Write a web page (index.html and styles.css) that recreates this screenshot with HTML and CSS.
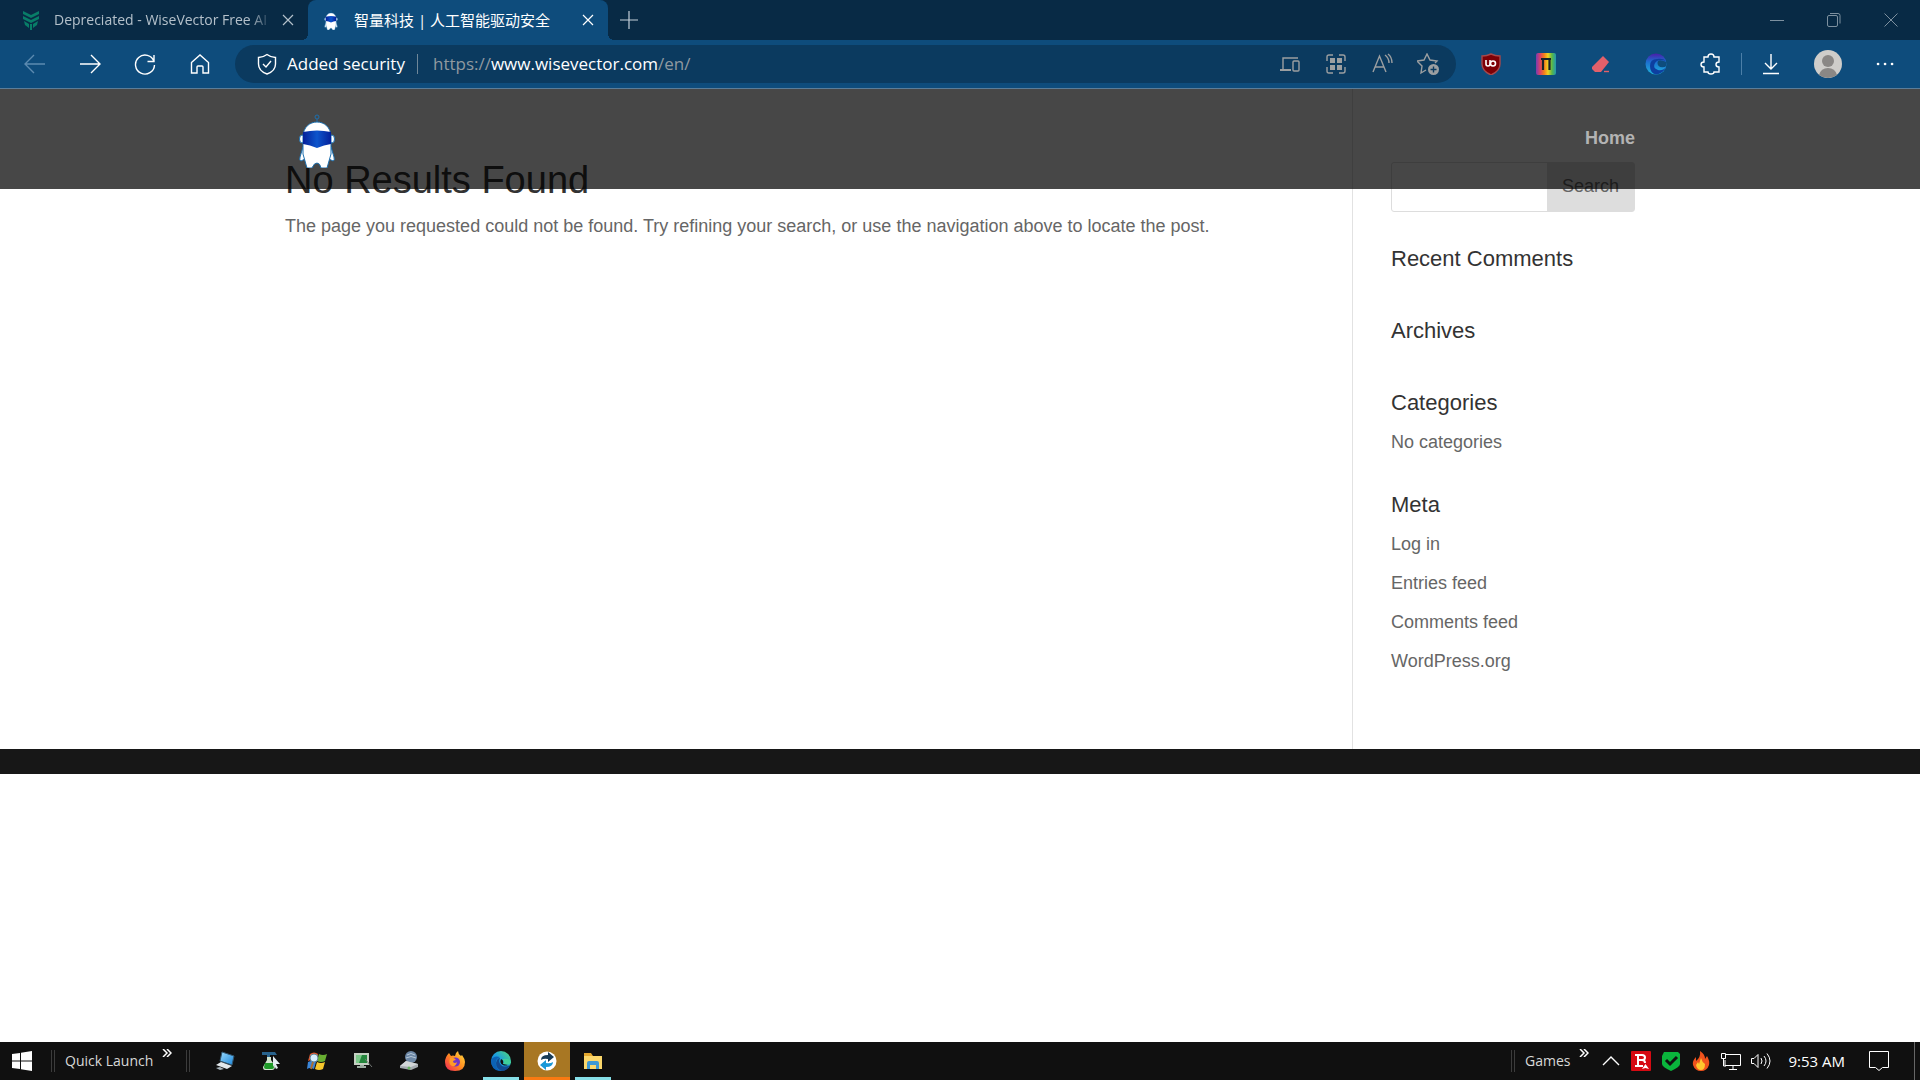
FILE: index.html
```html
<!DOCTYPE html>
<html lang="en">
<head>
  <meta charset="UTF-8">
  <meta name="viewport" content="width=device-width, initial-scale=1.0">
  <title>智量科技 | 人工智能驱动安全</title>
  <link rel="stylesheet" href="styles.css">
</head>
<body>
  <svg class="defs" aria-hidden="true">
    <defs>
      <linearGradient id="visor"><stop offset="0" stop-color="#04209a"/><stop offset=".5" stop-color="#0d55cc"/><stop offset="1" stop-color="#04209a"/></linearGradient>
      <linearGradient id="rainbow"><stop offset="0" stop-color="#7a3bb0"/><stop offset=".2" stop-color="#d8406a"/><stop offset=".4" stop-color="#f47a1c"/><stop offset=".6" stop-color="#f0d020"/><stop offset=".8" stop-color="#58b848"/><stop offset="1" stop-color="#2098b0"/></linearGradient>
      <linearGradient id="edge" x1="0" y1="1" x2="1" y2="0"><stop offset="0" stop-color="#0b5fb8"/><stop offset=".5" stop-color="#1b9de0"/><stop offset="1" stop-color="#55dd70"/></linearGradient>
      <linearGradient id="swirl" x1="0" y1="0" x2="0" y2="1"><stop offset="0" stop-color="#4a1ca8"/><stop offset=".4" stop-color="#1c6fd0"/><stop offset="1" stop-color="#20b4dc"/></linearGradient>
      <linearGradient id="fox" x1="1" y1="0" x2="0" y2="1"><stop offset="0" stop-color="#ffe040"/><stop offset=".5" stop-color="#ff8a20"/><stop offset="1" stop-color="#f0205a"/></linearGradient>
      <linearGradient id="sky" x1="0" y1="0" x2="1" y2="1"><stop offset="0" stop-color="#9adcff"/><stop offset="1" stop-color="#1a84d8"/></linearGradient>
    </defs>
    <symbol id="robot" viewBox="0 0 36 54">
      <g stroke="#1c6fae" stroke-width="1">
        <path d="M18 9V5" fill="none"/><circle cx="18" cy="3" r="2" fill="none"/>
        <path d="M4 33L1 43q-1 4 1 4l6-3zM32 33l3 10q1 4-1 4l-6-3z" fill="#fff"/>
        <ellipse cx="3" cy="25" rx="2.500" ry="4" fill="#fff"/><ellipse cx="33" cy="25" rx="2.500" ry="4" fill="#fff"/>
        <path d="M4 23C4 3 32 3 32 23V40L28 54H22Q21 49 18 49T13 54H8L4 40z" fill="#fff"/>
      </g>
      <path d="M4 18Q18 15 32 18V30Q25 31 18 34Q11 31 4 30z" fill="url(#visor)"/>
    </symbol>
    <symbol id="close" viewBox="0 0 16 16"><path d="M3 3l10 10M13 3L3 13" fill="none" stroke="currentColor" stroke-width="1.200"/></symbol>
    <symbol id="more" viewBox="0 0 10 8"><path d="M1 0l4 4-4 4M5 0l4 4-4 4" fill="none" stroke="#fff" stroke-width="1.500"/></symbol>
  </svg>

  <!-- browser tabs -->
  <div class="tabstrip">
    <div class="tab">
      <svg class="favicon" viewBox="0 0 18 20"><path d="M1 1l8 4 8-4v3L9 8 1 4zM1 6l8 4 8-4v3l-8 4-8-4zM2 11l5 3v4l-4-3zM16 11l-5 3v4l4-3zM8 14h2v6H8z" fill="#087d68"/></svg>
      <span class="tab-title fade">Depreciated - WiseVector Free AI</span>
      <button class="tab-close" aria-label="Close tab"><svg><use href="#close"/></svg></button>
    </div>
    <div class="tab active">
      <svg class="favicon"><use href="#robot"/></svg>
      <span class="tab-title">智量科技 | 人工智能驱动安全</span>
      <button class="tab-close" aria-label="Close tab"><svg><use href="#close"/></svg></button>
    </div>
    <button class="tab-new" aria-label="New tab"><svg viewBox="0 0 18 18"><path d="M9 0v18M0 9h18" fill="none" stroke="#c4d0da" stroke-width="1.200"/></svg></button>
    <div class="win-btns">
      <button aria-label="Minimize"><svg viewBox="0 0 14 14"><path d="M0 7.500h14"/></svg></button>
      <button aria-label="Restore"><svg viewBox="0 0 14 14"><rect x=".5" y="2.500" width="10" height="11" rx="1.500"/><path d="M3 .5h8q2 0 2 2v8"/></svg></button>
      <button aria-label="Close"><svg viewBox="0 0 14 14"><path d="M.5.5l13 13M13.500.5l-13 13"/></svg></button>
    </div>
  </div>

  <!-- address bar -->
  <div class="toolbar">
    <button class="tool dim" aria-label="Back"><svg viewBox="0 0 22 22"><path d="M21 11H1M10 2l-9 9 9 9"/></svg></button>
    <button class="tool" aria-label="Forward"><svg viewBox="0 0 22 22"><path d="M1 11h20M12 2l9 9-9 9"/></svg></button>
    <button class="tool" aria-label="Reload"><svg viewBox="0 0 22 22"><path d="M20 8.500A9.500 9.500 0 1 0 20.500 12M20 2v6.500h-6.500"/></svg></button>
    <button class="tool" aria-label="Home"><svg viewBox="0 0 22 22"><path d="M2.500 9.500L11 2l8.500 7.500V20h-5.500v-6q0-1-1-1h-4q-1 0-1 1v6H2.500z"/></svg></button>
    <div class="address">
      <button class="secure"><svg viewBox="0 0 22 22"><path d="M11 1.500q4 3 8.500 3V11q0 7-8.500 10Q2.500 18 2.500 11V4.500q4.500 0 8.500-3zM7 11l3 3 5-6"/></svg>Added security</button>
      <span class="divider"></span>
      <div class="url" role="textbox" aria-label="Address" contenteditable="true">https://<b>www.wisevector.com</b>/en/</div>
      <button class="tool" aria-label="Devices"><svg viewBox="0 0 22 22"><path d="M4 16V5h15"/><path d="M1 17h11" stroke-width="2"/><rect x="14" y="8" width="6" height="10" rx="1"/></svg></button>
      <button class="tool" aria-label="Apps"><svg viewBox="0 0 22 22"><path d="M2 8V4q0-2 2-2h4M14 2h4q2 0 2 2v4M20 14v4q0 2-2 2h-4M8 20H4q-2 0-2-2v-4"/><path d="M5 5h5v5H5zM12 5h5v5h-5zM5 12h5v5H5zM12 12h5v5h-5z" class="solid"/></svg></button>
      <button class="tool" aria-label="Read aloud"><svg viewBox="0 0 22 22"><path d="M2 19L8.500 3 15 19M4 14h9M14 2q4 3 4 8M17 1q4 3 4 9"/></svg></button>
      <button class="tool" aria-label="Add to favorites"><svg viewBox="0 0 22 22"><path d="M9 17l-5 3 1-7-5-5 7-1 3-6 3 6 7 1-2 2"/><circle cx="16.500" cy="16.500" r="5.500" class="solid"/><path d="M16.500 13.500v6M13.500 16.500h6" stroke="#0b3a5f"/></svg></button>
    </div>
    <div class="extensions">
      <button class="tool" aria-label="uBlock"><svg viewBox="0 0 22 22"><path d="M11 1q4 2 9 2v8q0 7-9 11Q2 18 2 11V3q5 0 9-2z" fill="#7d0006" stroke="#a5484c"/><path d="M6 7v4q0 2 2 2t2-2V7" stroke="#fff" stroke-width="1.600"/><circle cx="13" cy="10.500" r="2.500" stroke="#fff" stroke-width="1.600"/></svg></button>
      <button class="tool" aria-label="Rainbow"><svg viewBox="0 0 22 22"><rect x="1" y="0" width="20" height="22" rx="2" fill="url(#rainbow)" stroke="none"/><path d="M6 6h10M8 6v11M14.500 6v11" stroke="#16222a" stroke-width="2.200"/></svg></button>
      <button class="tool" aria-label="Eraser"><svg viewBox="0 0 22 22"><path d="M2 14L13 3l6 6-8 10H5l-3-3z" fill="#e2606a" stroke="none"/><path d="M14 18.500h5" stroke="#e2606a"/></svg></button>
      <button class="tool" aria-label="Edge extension"><svg viewBox="0 0 22 22"><circle cx="11" cy="11" r="10.500" fill="url(#swirl)" stroke="none"/><path d="M21 8Q13 5 10 10t3 7q5 1 8-3-3 7-10 7.500Q5 20 5 13t7-7q6-1 9 2z" fill="#0d3fa0" stroke="none"/><path d="M21.500 9q-9-4-9 1t7 4q2 0 2-5z" fill="#0e4c7c" stroke="none"/></svg></button>
      <button class="tool" aria-label="Extensions"><svg viewBox="0 0 22 22"><path d="M4 4h4q0-3 3-3t3 3h5v5q-3 0-3 2.500t3 2.500v5h-5q0 2-3 2t-3-2H4v-5q-3 0-3-2.500T4 9z"/></svg></button>
    </div>
    <div class="session">
      <button class="tool" aria-label="Downloads"><svg viewBox="0 0 22 22"><path d="M11 1v15M5 10l6 6 6-6M3 20.500h16"/></svg></button>
      <button class="tool" aria-label="Profile"><svg class="avatar" viewBox="0 0 28 28"><circle cx="14" cy="14" r="14" fill="#cfcdca"/><circle cx="14" cy="11" r="6" fill="#8a8785"/><path d="M5 25q2-7 9-7t9 7q-4 3-9 3t-9-3z" fill="#8a8785"/></svg></button>
      <button class="tool" aria-label="Settings and more"><svg viewBox="0 0 22 22"><path d="M4 11h.1M11 11h.1M18 11h.1" stroke-width="2.600" stroke-linecap="round"/></svg></button>
    </div>
  </div>

  <!-- web page -->
  <div class="page">
    <header class="site-header">
      <div class="container">
        <a href="#" class="logo" aria-label="WiseVector"><svg><use href="#robot"/></svg></a>
        <nav><a href="#">Home</a></nav>
      </div>
    </header>
    <main class="container content">
      <article>
        <h1>No Results Found</h1>
        <p>The page you requested could not be found. Try refining your search, or use the navigation above to locate the post.</p>
      </article>
      <aside>
        <form class="search">
          <input type="text" aria-label="Search for">
          <button type="button">Search</button>
        </form>
        <section class="widget"><h4>Recent Comments</h4></section>
        <section class="widget"><h4>Archives</h4></section>
        <section class="widget">
          <h4>Categories</h4>
          <ul><li>No categories</li></ul>
        </section>
        <section class="widget">
          <h4>Meta</h4>
          <ul>
            <li><a href="#">Log in</a></li>
            <li><a href="#">Entries feed</a></li>
            <li><a href="#">Comments feed</a></li>
            <li><a href="#">WordPress.org</a></li>
          </ul>
        </section>
      </aside>
    </main>
    <footer class="site-footer"></footer>
  </div>

  <!-- taskbar -->
  <div class="taskbar">
    <button class="start" aria-label="Start"><svg viewBox="0 0 20 20"><path d="M0 3l8-1v7.500H0zM9 1.800L20 0v9.500H9zM0 10.500h8V18l-8-1zM9 10.500h11V20L9 18.200z" fill="#fff"/></svg></button>
    <span class="grip"></span>
    <span class="band">Quick Launch</span>
    <button class="more" aria-label="More"><svg><use href="#more"/></svg></button>
    <span class="grip"></span>
    <div class="apps">
      <button class="app" aria-label="Computer"><svg viewBox="0 0 20 20"><path d="M7 1l12 4-2 9L5 10z" fill="url(#sky)" stroke="#31556e"/><path d="M1 14l5-3 11 4-5 3z" fill="#e2e8ec"/><path d="M1 17l4-1 4 2-4 1z" fill="#aab6be"/></svg></button>
      <button class="app" aria-label="Cleaner"><svg viewBox="0 0 20 20"><path d="M1 1h13l2 3H9v2H6V4H1z" fill="#28628c"/><path d="M6 6h4v3l4 6q0 4-3 4H4q-2 0-2-3l4-7z" fill="#d2e6d0"/><path d="M4 12h8l1 4q0 2-2 2H5q-2 0-2-2z" fill="#1e9a28"/><path d="M12 5l7 8h-4l2 4-2 1-2-4-1 2z" fill="#e4edf2"/></svg></button>
      <button class="app" aria-label="Windows Update"><svg viewBox="0 0 20 20"><path d="M3 3q4-3 8 0L9 10q-4-2-8 0z" fill="#e8582a"/><path d="M12 3q4 2 8 0l-2 7q-4 2-8 0z" fill="#68ae32"/><path d="M1 11q4-2 8 0l-2 7q-4-2-7 0z" fill="#3b86d8"/><path d="M10 11q4 2 8 0l-2 7q-4 2-8 0z" fill="#f6c72c"/><circle cx="7" cy="7" r="4" fill="#d8efff" stroke="#608498"/><path d="M6 11l-2 7" stroke="#a97034" stroke-width="2"/></svg></button>
      <button class="app" aria-label="Monitor"><svg viewBox="0 0 20 20"><path d="M1 2h15v12H1z" fill="#c4cfc2"/><path d="M3 4h11v8H3z" fill="#24863c"/><path d="M3 4h6l-3 8H3z" fill="#7cc88a"/><path d="M7 14h4v1h2v2H4v-2h3z" fill="#9baaa0"/><path d="M12 8l7 8" stroke="#6f7470"/></svg></button>
      <button class="app" aria-label="Drive tool"><svg viewBox="0 0 20 20"><circle cx="12" cy="6" r="6" fill="#6b86a4"/><path d="M8 4q4-3 8 0M7 7q5-3 10 0" stroke="#b6c7d6" fill="none"/><path d="M1 15l6-5 12 3v3l-7 3L1 17z" fill="#a5abb0"/><path d="M1 15l6-5 12 3-7 3z" fill="#d2d6d8"/><circle cx="10" cy="17" r="1.500" fill="#64b35d"/></svg></button>
      <button class="app" aria-label="Firefox"><svg viewBox="0 0 20 20"><path d="M4 2l2 3q2-1 4 0Q10 2 13 0q0 3 3 5l1-1q3 4 3 7 0 9-10 9T0 11Q0 6 4 2z" fill="url(#fox)"/><circle cx="10.500" cy="11" r="4.500" fill="#6e36c8"/><path d="M5 7q4-1 6 2-3 0-3 2 2 2 4 0-1 5-5 4-4-2-2-8z" fill="#ff9b28"/></svg></button>
      <button class="app open" aria-label="Edge"><svg viewBox="0 0 20 20"><circle cx="10" cy="10" r="10" fill="url(#edge)"/><path d="M0 9q3-5 9-3-5 2-4 8t7 6Q0 21 0 9z" fill="#0c62b4"/><path d="M9 7q-2 4 1 7t9 0q-3 6-8 6-6-2-6-8 1-5 4-5z" fill="#124a90"/><path d="M11 8q3 2 1 5 4 2 8-1v-1q-1-4-9-3z" fill="#3fcf9a"/><path d="M10 8q3 1 2 5l5 1q-3 1-5 0-4-2-2-6z" fill="#111"/></svg></button>
      <button class="app current" aria-label="Sync"><svg viewBox="0 0 20 20"><circle cx="10" cy="10" r="9.500" fill="#fff"/><path d="M4 9q0-5 7-5V1l6 5-6 5V8q-4-1-7 1z" fill="#173b57"/><path d="M16 11q0 5-7 5v3l-6-5 6-5v3q4 1 7-1z" fill="#1998d8"/></svg></button>
      <button class="app open" aria-label="File Explorer"><svg viewBox="0 0 20 20"><path d="M1 2h7l2 3h9v4H1z" fill="#e3a72e"/><path d="M1 5h18v13H1z" fill="#fbd76b"/><path d="M4 18v-6q0-2 2-2h8q2 0 2 2v6h-3v-4H7v4z" fill="#3e98d2"/></svg></button>
    </div>
    <div class="tray">
      <span class="grip"></span>
      <span class="band">Games</span>
      <button class="more" aria-label="More"><svg><use href="#more"/></svg></button>
      <button class="tray-icon" aria-label="Show hidden icons"><svg viewBox="0 0 20 20"><path d="M2 14l8-8 8 8" fill="none" stroke="#fff" stroke-width="1.400"/></svg></button>
      <button class="tray-icon" aria-label="Bitdefender"><svg viewBox="0 0 20 20"><rect width="20" height="20" rx="1" fill="#d60a12"/><path d="M4 4h7q3 0 3 2.500T11 9H7M11 9q3 0 3 3M4 15h8M7 4v11" fill="none" stroke="#fff" stroke-width="2"/><path d="M11 18l3.500-5 3.500 5-3.500-1z" fill="#fff"/></svg></button>
      <button class="tray-icon" aria-label="Shield"><svg viewBox="0 0 20 20"><path d="M3 1h14l2 2v10q0 3-9 7-9-4-9-7V5z" fill="#0ab43c"/><path d="M5 9l4 4 7-7" fill="none" stroke="#101010" stroke-width="3"/></svg></button>
      <button class="tray-icon" aria-label="Flame"><svg viewBox="0 0 20 20"><path d="M9 0q5 3 5 8l2-3q3 5 2 9-2 6-8 6T2 14q-1-4 3-8v4q5-4 4-10z" fill="#f1531c"/><path d="M10 7q1 4 4 6 0 6-4 6t-5-5l2-3 1 2z" fill="#ffc82e"/></svg></button>
      <button class="tray-icon" aria-label="Network"><svg viewBox="0 0 20 20"><path d="M5 3.500h14.500v11H4V9M12 15v3M8 18.500h8M.5 2.500h4v5h-4zM2.500 8v7H5" fill="none" stroke="#fff"/></svg></button>
      <button class="tray-icon" aria-label="Volume"><svg viewBox="0 0 20 20"><path d="M.5 7.500H3l4-4v13l-4-4H.5zM10 7q2 3 0 6M13 5q4 5 0 10M16 2.500q6 7.500 0 15" fill="none" stroke="#fff"/></svg></button>
      <span class="clock">9:53 AM</span>
      <button class="notice" aria-label="Notifications"><svg viewBox="0 0 20 20"><path d="M.5.5h19v16h-6L10 19.500 6.500 16.500h-6z" fill="none" stroke="#fff"/></svg></button>
      <button class="desktop" aria-label="Show desktop"></button>
    </div>
  </div>
</body>
</html>
```
FILE: styles.css
```css
*{ box-sizing: border-box;}
body{ margin: 0; min-height: 100vh; display: flex; flex-direction: column; background: #fff; font-family: "Open Sans", "Noto Sans CJK SC", sans-serif;}
button{ padding: 0; border: 0; background: none; font: inherit; color: inherit;}
a{ color: inherit; text-decoration: none;}
svg{ display: block; flex: none;}
.defs{ position: absolute; width: 0; height: 0;}

/* tabs */
.tabstrip{ display: flex; height: 40px; padding-left: 8px; background: #082a45; color: #b4c0ca;}
.tab{ flex: 0 1 300px; min-width: 0; display: flex; align-items: center; padding: 0 12px 0 14px; font-size: 14px; line-height: 20px;}
.tab.active{ position: relative; background: #0e4c7c; color: #fff; border-radius: 8px 8px 0 0; font-size: 15px;}
.tab.active::before, .tab.active::after{ content: ""; position: absolute; bottom: 0; width: 6px; height: 6px;}
.tab.active::before{ left: -6px; background: radial-gradient(circle at 0 0, transparent 6px, #0e4c7c 6px);}
.tab.active::after{ right: -6px; background: radial-gradient(circle at 100% 0, transparent 6px, #0e4c7c 6px);}
.favicon{ width: 18px; height: 20px; margin-right: 14px;}
.tab-title{ flex: 1; min-width: 0; overflow: hidden; white-space: nowrap;}
.fade{ -webkit-mask-image: linear-gradient(to right, #000 90%, transparent); mask-image: linear-gradient(to right, #000 90%, transparent);}
.tab-close{ margin-left: 8px;}
.tab-close svg{ width: 16px; height: 16px;}
.tab-new{ width: 42px; display: flex; align-items: center; justify-content: center;}
.tab-new svg{ width: 18px; height: 18px;}
.win-btns{ display: flex; margin-left: auto; padding-right: 1px;}
.win-btns button{ width: 57px; display: flex; align-items: center; justify-content: center;}
.win-btns svg{ width: 14px; height: 14px; fill: none; stroke: #7d909f;}

/* toolbar */
.toolbar{ display: flex; align-items: center; height: 48px; padding: 0 7px; background: #0e4c7c; color: #fff;}
.tool{ width: 55px; height: 38px; display: flex; align-items: center; justify-content: center;}
.tool svg, .secure svg{ width: 22px; height: 22px; fill: none; stroke: currentColor; stroke-width: 1.400;}
.tool .solid{ fill: currentColor; stroke: none;}
.tool .avatar{ width: 28px; height: 28px; stroke: none;}
.dim{ color: #5c8ab0;}
.address{ flex: 1; min-width: 0; display: flex; align-items: center; height: 38px; margin: 0 7px 0 8px; padding: 0 5px 0 21px; border-radius: 19px; background: #0b3a5f; font-size: 17px; line-height: 36px;}
.address .tool{ width: 46px; color: #9c9fa1;}
.secure{ display: flex; align-items: center; gap: 9px; white-space: nowrap;}
.divider{ width: 1px; height: 20px; margin: 0 15px 0 12px; background: #6f8799;}
.url{ flex: 1; min-width: 0; color: #9099a0; white-space: nowrap;}
.url b{ font-weight: 400; color: #fff;}
.extensions{ display: flex;}
.session{ display: flex; margin-left: 3px; border-left: 1px solid #4c7fa8;}
.session .tool{ width: 57px; height: 22px;}

/* web page */
.page{ flex: 1; position: relative; border-top: 1px solid #5b7d99; font: 18px/30px "Liberation Sans", Arial, sans-serif; color: #666;}
.container{ width: 80%; max-width: 1350px; margin: 0 auto;}
.site-header{ position: absolute; left: 0; right: 0; top: 0; height: 100px; background: rgba(0,0,0,.72);}
.site-header .container{ display: flex; justify-content: space-between;}
.logo{ padding: 25px 14px 0;}
.logo svg{ width: 36px; height: 54px;}
nav{ padding-top: 34px; font-weight: 700; color: #b3b3b3;}
.content{ display: flex;}
article{ flex: 1; padding: 72px 38px 0 0; border-right: 1px solid #e2e2e2;}
h1{ margin: 0; font-size: 38px; line-height: 38px; font-weight: 400; color: #333; padding-bottom: 12px;}
article p{ margin: 0;}
aside{ width: 282px; padding: 73px 0 36px 38px;}
.search{ display: flex; height: 50px; margin-bottom: 36px; border: 1px solid #ddd; border-radius: 3px;}
.search input{ flex: 1; min-width: 0; border: 0; background: none; padding: 0 8px; font: inherit;}
.search button{ padding: 0 15px 2px; background: #ddd; color: #666;}
.widget{ margin-bottom: 37px;}
h4{ margin: 0; padding-bottom: 13px; font-size: 22px; line-height: 22px; font-weight: 400; color: #333;}
ul{ margin: 0; padding: 0; list-style: none;}
li + li{ margin-top: 9px;}
.site-footer{ height: 25px; background: #171717;}

/* taskbar */
.taskbar{ display: flex; height: 38px; background: #101010; color: #d8d8d8; font-size: 14px; line-height: 38px;}
.taskbar button{ display: flex; align-items: center; justify-content: center;}
.taskbar svg{ width: 20px; height: 20px;}
.start{ width: 44px;}
.grip{ width: 4px; height: 22px; margin: 8px 0 0 7px; border: solid #3c3c3c; border-width: 0 1px;}
.band{ margin-left: 10px; white-space: nowrap;}
.taskbar .more{ width: 10px; height: 8px; margin: 7px 7px 0 9px;}
.taskbar .more svg{ width: 10px; height: 8px;}
.apps{ display: flex; margin-left: 12px;}
.app{ width: 46px;}
.app.open{ background: linear-gradient(#86dfe8, #86dfe8) bottom / 36px 3px no-repeat;}
.app.current{ background: linear-gradient(#f97a12, #f97a12) bottom / 46px 3px no-repeat, #a87723;}
.tray{ display: flex; margin-left: auto;}
.tray-icon{ width: 30px;}
.clock{ padding: 0 24px 0 12px; color: #fff; font-size: 15px; white-space: nowrap;}
.taskbar .notice{ margin-right: 25px;}
.desktop{ width: 6px; border-left: 1px solid #666;}
```
